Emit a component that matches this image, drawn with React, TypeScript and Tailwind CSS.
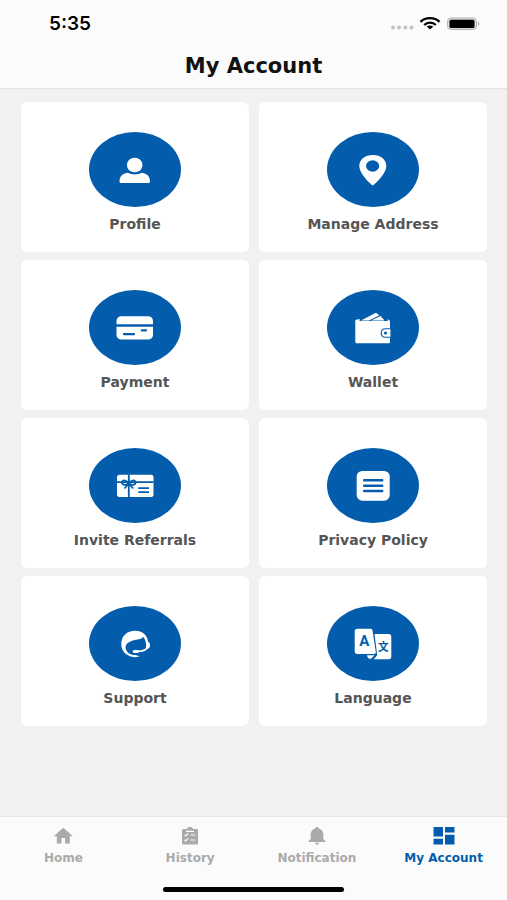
import type { ReactNode } from "react";

const ProfileIcon = (
  <>
    <ellipse cx="45.7" cy="33" rx="7.8" ry="7.3" fill="#fff" />
    <path
      d="M30.5 49.5C30.5 44 34.5 41 39 40.8C42.5 43 49 43 52.5 40.8C57 41 61 44 61 49.5C61 50.5 60.3 51 59 51H32.5C31.2 51 30.5 50.5 30.5 49.5Z"
      fill="#fff"
    />
  </>
);

const PinIcon = (
  <path
    fillRule="evenodd"
    d="M45.8 53.5C44.5 53 32.3 42 32.3 34C32.3 27.5 38 23 45.8 23C53.6 23 59.3 27.5 59.3 34C59.3 42 47.1 53 45.8 53.5ZM45.6 28.3A6.6 5.7 0 1 0 45.6 39.7A6.6 5.7 0 1 0 45.6 28.3Z"
    fill="#fff"
  />
);

const CardIcon = (
  <>
    <path d="M27.5 34.2V31.5C27.5 28 29.5 26.3 33 26.3H58.5C62 26.3 64 28 64 31.5V34.2Z" fill="#fff" />
    <path d="M27.5 36.8H64V44.5C64 48 62 49.5 58.5 49.5H33C29.5 49.5 27.5 48 27.5 44.5Z" fill="#fff" />
    <path d="M35 44.2H45M52.8 40.3H57" stroke="#045dac" strokeWidth="2.2" strokeLinecap="round" />
  </>
);

const WalletIcon = (
  <>
    <path d="M34 30.5L49 22.8L52.3 25.3L42 30.5Z" fill="#fff" />
    <path d="M44 30.5L53.5 26L57.5 30.5Z" fill="#fff" />
    <path
      d="M28.3 30.5C29 29.5 31 29.3 33 29.3L32.4 31H61L60 29.5C62 29.5 63 30.3 63 32V52C63 53 62.5 53.3 61.5 53.3H30C28.8 53.3 28.3 52.8 28.3 51.5Z"
      fill="#fff"
    />
    <path
      d="M64 38.8H58.5C55.8 38.8 54.2 40.6 54.2 43C54.2 45.4 55.8 47.2 58.5 47.2H64Z"
      fill="#fff"
      stroke="#045dac"
      strokeWidth="1.1"
    />
    <circle cx="58.5" cy="43" r="1.6" fill="#045dac" />
  </>
);

const GiftCardIcon = (
  <>
    <rect x="28" y="26.7" width="36.5" height="22.3" rx="2.5" fill="#fff" />
    <path d="M28 34.2H64.5M39.8 26.7V49" stroke="#045dac" strokeWidth="1.8" />
    <path
      d="M39.8 35.5C37 31.5 33 31.5 33 34.5C33 37.2 37 37.5 39.8 35.5C42.6 31.5 46.5 31.5 46.5 34.5C46.5 37.2 42.6 37.5 39.8 35.5ZM39.5 36L35.5 40.5M40 36L44.2 40.5"
      fill="none"
      stroke="#045dac"
      strokeWidth="1.8"
    />
    <path d="M49.3 40.2H60M49.3 44.2H60" stroke="#045dac" strokeWidth="1.8" />
  </>
);

const DocumentIcon = (
  <>
    <rect x="29.7" y="23" width="33" height="29.7" rx="5.5" fill="#fff" />
    <path d="M37.2 32.3H55.2M37.2 37.7H55.2M37.2 43H55.2" stroke="#045dac" strokeWidth="2.5" strokeLinecap="round" />
  </>
);

const SupportIcon = (
  <>
    <path
      d="M32.3 38C32.3 30 38 24.7 46 24.7C53.5 24.7 58.8 29.5 59 35.8C60.4 36.4 61 37.5 61 39C61 41 60.3 42.5 58.8 42.8L57 43.6C57.6 38 56.8 33.5 53.8 30.8C53 33.7 47 33.2 42 35.2C38 36.8 36.3 39 36.5 42C37.5 46.5 41 49 46 49L51 50.3C48 51.5 43.5 51.5 40 49.7C35 47.5 32.3 43.5 32.3 38Z"
      fill="#fff"
    />
    <path d="M58.3 41C57.5 44.5 54 45.6 47 45.4" fill="none" stroke="#fff" strokeWidth="1.8" />
    <ellipse cx="46.8" cy="45.4" rx="3.2" ry="1.7" fill="#fff" />
  </>
);

const LanguageIcon = (
  <>
    <path
      d="M47.5 28H61.5C63.3 28 64.3 29 64.3 30.7V50.5C64.3 52.3 63.3 53.2 61.5 53.2H46.8L50.2 49.2Z"
      fill="#fff"
    />
    <path
      d="M30.3 22.7H43.2C44.5 22.7 45.3 23.3 45.5 24.5L48.8 46C49 47.3 48.3 48 47.3 48H30.3C28.6 48 27.7 47 27.7 45.5V25.2C27.7 23.6 28.6 22.7 30.3 22.7Z"
      fill="#fff"
    />
    <path d="M40 49.3H47.5L44 52.8H42.8C41.2 52.8 40.5 51.5 40 49.3Z" fill="#fff" />
    <text
      x="37.2"
      y="40"
      textAnchor="middle"
      fontSize="15"
      fill="#045dac"
      className="font-[Roboto,sans-serif] font-bold"
    >
      A
    </text>
    <text x="56.2" y="44.6" textAnchor="middle" fontSize="11" fontWeight="700" fill="#045dac">
      文
    </text>
  </>
);

const menuItems: { label: string; icon: ReactNode }[] = [
  { label: "Profile", icon: ProfileIcon },
  { label: "Manage Address", icon: PinIcon },
  { label: "Payment", icon: CardIcon },
  { label: "Wallet", icon: WalletIcon },
  { label: "Invite Referrals", icon: GiftCardIcon },
  { label: "Privacy Policy", icon: DocumentIcon },
  { label: "Support", icon: SupportIcon },
  { label: "Language", icon: LanguageIcon },
];

const tabs: { label: string; active?: boolean; icon: ReactNode }[] = [
  {
    label: "Home",
    icon: <path d="M12.3 1.8L2.8 10.2H5.8V17.5H10.5V12H14.1V17.5H18.8V10.2H21.8Z" />,
  },
  {
    label: "History",
    icon: (
      <>
        <path d="M5.5 3H9C9.3 1.6 10.5 1 12 1S14.7 1.6 15 3H18.5C19.5 3 20 3.5 20 4.4V17.2C20 18.1 19.5 18.6 18.5 18.6H5.5C4.5 18.6 4 18.1 4 17.2V4.4C4 3.5 4.5 3 5.5 3Z" />
        <path
          d="M8 5.3H16M6.5 8.8L7.8 9.9L10.3 7.3M6.5 13.8L7.8 14.9L10.3 12.3M12.5 9H17.3M12.5 14H17.3"
          fill="none"
          stroke="#fbfbfb"
          strokeWidth="1.2"
        />
      </>
    ),
  },
  {
    label: "Notification",
    icon: (
      <path d="M12 1C13 1 13.7 1.6 13.7 2.5C16.8 3.2 18.3 5.5 18.3 8.5V13L20.5 15.2V16H3.5V15.2L5.7 13V8.5C5.7 5.5 7.2 3.2 10.3 2.5C10.3 1.6 11 1 12 1ZM10 16.8H14C14 18 13.2 18.6 12 18.6S10 18 10 16.8Z" />
    ),
  },
  {
    label: "My Account",
    active: true,
    icon: <path d="M1.5 1H11V10.5H1.5ZM13 1H22.5V6.5H13ZM13 8.7H22.5V18.5H13ZM1.5 12.7H11V18.5H1.5Z" />,
  },
];

function StatusBar() {
  return (
    <div className="flex h-12 items-center justify-between pl-[49px] pr-[27px]">
      <span className="font-[Inter,sans-serif] text-[19px] leading-6 font-semibold text-black">5:35</span>
      <svg width="92" height="16" viewBox="0 0 92 16" aria-hidden="true">
        <g fill="#c4c4c4">
          <circle cx="5" cy="11.5" r="2" />
          <circle cx="11" cy="11.5" r="2" />
          <circle cx="17.3" cy="11.5" r="2" />
          <circle cx="23.5" cy="11.5" r="2" />
        </g>
        <g fill="none" stroke="#000" strokeWidth="2.4">
          <path d="M32.5 5.8C37.5 0.9 46.5 0.9 51.5 5.8" />
          <path d="M36.2 9C39.5 5.8 44.5 5.8 47.8 9" />
        </g>
        <path d="M38.8 10.6C40.5 9 43.5 9 45.2 10.6L42 13.5Z" />
        <rect x="59.5" y="2" width="29" height="11.5" rx="3.5" fill="#dcdcdc" stroke="#b5b5b5" />
        <rect x="61.5" y="3.7" width="25" height="8.2" rx="1.5" />
        <path d="M90 5.5C91.5 6.3 91.5 9 90 9.8Z" fill="#999" />
      </svg>
    </div>
  );
}

export default function App() {
  return (
    <div className="flex min-h-screen flex-col bg-[#f1f1f1] font-['DejaVu_Sans','Noto_Sans_CJK_SC',sans-serif]">
      <header className="border-b border-[#e2e2e2] bg-[#fbfbfb] pb-1.5">
        <StatusBar />
        <h1 className="mt-0.5 text-center text-[21px] leading-8 font-bold text-[#111111]">My Account</h1>
      </header>

      <main className="grid flex-1 grid-cols-2 content-start gap-x-2.5 gap-y-2 pt-[13px] pr-5 pl-[21px]">
        {menuItems.map((item) => (
          <button key={item.label} className="flex h-[150px] flex-col items-center rounded-md bg-white pt-[30px]">
            <span className="h-[75px] w-[92px] rounded-[50%] bg-[#045dac]">
              <svg width="92" height="75" viewBox="0 0 92 75" aria-hidden="true">
                {item.icon}
              </svg>
            </span>
            <span className="mt-[7px] text-sm leading-5 font-bold text-[#555555]">{item.label}</span>
          </button>
        ))}
      </main>

      <nav className="border-t border-[#e6e6e6] bg-[#fbfbfb] pt-[9px]">
        <div className="grid grid-cols-4">
          {tabs.map((tab) => (
            <a
              key={tab.label}
              href="#"
              aria-current={tab.active ? "page" : undefined}
              className={`flex flex-col items-center text-xs font-bold ${tab.active ? "text-[#045dac]" : "text-[#aaaaaa]"}`}
            >
              <svg width="24" height="20" viewBox="0 0 24 20" fill="currentColor" aria-hidden="true">
                {tab.icon}
              </svg>
              <span className="mt-0.5 leading-5">{tab.label}</span>
            </a>
          ))}
        </div>
        <div className="mx-auto mt-[19px] mb-2 h-[5px] w-[181px] rounded-full bg-black" />
      </nav>
    </div>
  );
}
